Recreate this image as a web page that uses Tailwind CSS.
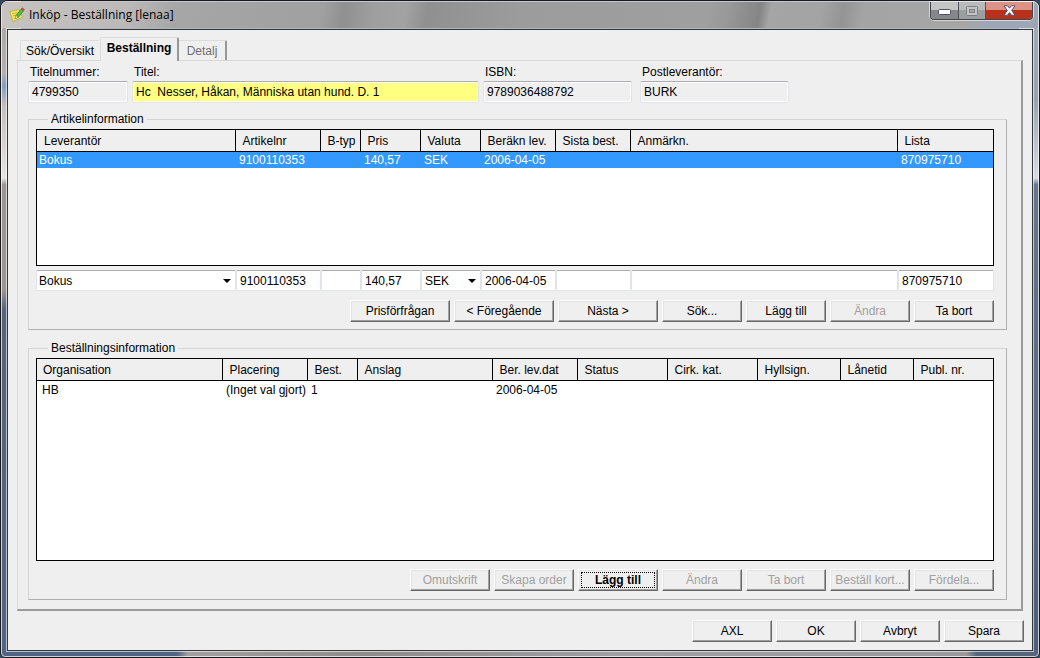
<!DOCTYPE html>
<html lang="sv">
<head>
<meta charset="utf-8">
<title>Inköp - Beställning [lenaa]</title>
<script src="https://cdn.jsdelivr.net/npm/@tailwindcss/browser@4"></script>
</head>
<body class="bg-[#35475f] font-['Liberation_Sans',Arial,sans-serif] text-xs leading-4 text-black">
<div class="flex min-h-screen w-full flex-col rounded-t-lg rounded-b-md border border-[#1b191c] bg-[linear-gradient(to_right,#4f6586_17%,#a3a09f_18%,#8f8b89_35%,#a19fa2_60%,#9b999b_93%,#54657d_94%),linear-gradient(#a5adb8,#98a1ae_15%,#d9dde2_27%,#66768b_28%,#4d5f78),linear-gradient(#a8a4a2,#b5b0ae_11%,#7f9fc4_13%,#c5bfbd_16%,#e8e4e2_27%,#9b9694_28%,#9b9694_44%,#54657d_47%,#4f6586)] bg-[position:bottom,right,left] bg-[size:100%_7px,20px_100%,20px_100%] bg-no-repeat">
<div class="flex grow flex-col rounded-t-md rounded-b border border-white/70">

<header class="flex h-[26px] items-start rounded-t-md bg-[linear-gradient(100deg,#c6c3c1,#bcbab9_12%,#a6a6a6_17%,#a0a0a0_31%,#909090_33%,#9f9f9f_36%,#a2a2a2_39%,#909090_41%,#9c9c9c_50%,#9f9f9f_68%,#989898_70%,#858585_73%,#a5a5a5_74%,#a3a3a3_79%,#949494_81%,#a4a4a4_83%,#a6a6a6_93%,#9da6b5_95%)]">
  <svg class="ml-[7px] mt-[5px] size-4 shrink-0" viewBox="0 0 16 16" aria-hidden="true">
    <path d="M.8 4.500 10 2.800l3.500 7.400L4 14.500z" fill="#f6ec62" stroke="#c2a62c" stroke-width=".8"/>
    <path d="M3 6.800 8.500 5.600M3.800 9l4-1M4.500 11.400l5.500-1.600" stroke="#b39a30" stroke-width=".8"/>
    <path d="M7 8.500 12.200 2l2.300 1.800L9.300 10.500l-3 1z" fill="#58b947" stroke="#2f7d2c" stroke-width=".7"/>
    <path d="m12.200 2 1-1.300 2.300 1.800-1 1.300z" fill="#e2473a" stroke="#b93026" stroke-width=".5"/>
    <path d="m7 8.700 1.900 1.700-2.600 1.100z" fill="#f5d9a0"/>
  </svg>
  <h1 class="ml-1 mt-[5px] grow font-['Open_Sans','Noto_Sans',sans-serif] text-xs leading-4">Inköp - Beställning [lenaa]</h1>
  <div class="mr-[5px] flex h-[18px] shrink-0 overflow-hidden rounded-b border border-t-0 border-[#40434a] shadow-[0_0_0_1px_#ffffff90]">
    <button type="button" aria-label="Minimera" class="flex w-7 items-end justify-center border-r border-[#50535a] bg-linear-to-b from-[#c4c4c4] from-50% to-[#85878a] to-50% pb-1">
      <svg width="13" height="6" viewBox="0 0 13 6"><rect x=".5" y=".5" width="12" height="5" rx="1" fill="#fff" stroke="#50506a"/></svg>
    </button>
    <button type="button" aria-label="Maximera" disabled class="flex w-[27px] items-center justify-center border-r border-[#50535a] bg-linear-to-b from-[#b9bbbb] from-50% to-[#9b9fa1] to-50%">
      <svg width="12" height="10" viewBox="0 0 12 10"><rect x=".5" y=".5" width="11" height="9" rx="1" fill="#c4c4c4" stroke="#7d7f83"/><rect x="3.500" y="3.500" width="5" height="3" fill="#a5a7a8" stroke="#7d7f83"/></svg>
    </button>
    <button type="button" aria-label="Stäng" class="flex w-[46px] items-center justify-center bg-linear-to-b from-[#dd9286] from-50% to-[#b8311d] to-50%">
      <svg width="13" height="11" viewBox="0 0 13 11"><path d="M1 .8h3.500l2 2.400 2-2.400H12L8.700 5.400 12 10.200H8.500l-2-2.600-2 2.600H1l3.300-4.800z" fill="#fff" stroke="#50506a" stroke-width="1"/></svg>
    </button>
  </div>
</header>

<main class="mx-1 mb-1 flex grow flex-col border border-white/60">
<div class="flex grow flex-col border border-[#33363b] bg-[#efefef] px-[9px] pb-2 pt-[7px]">

  <div class="ml-[3px] flex items-end" role="tablist">
    <button type="button" role="tab" class="mr-px h-5 w-[79px] whitespace-nowrap rounded-tl-xs border border-r-0 border-b-0 border-[#dcdcdc] text-center">Sök/Översikt</button>
    <button type="button" role="tab" aria-selected="true" class="relative -mb-px h-6 w-[79px] rounded-t-xs border border-r-2 border-b-0 border-[#dcdcdc] border-r-[#979797] bg-[#efefef] pb-1 text-center font-bold">Beställning</button>
    <button type="button" role="tab" class="h-5 w-12 rounded-tr-xs border border-r-2 border-b-0 border-l-0 border-[#dcdcdc] border-r-[#979797] text-center text-[#707070]">Detalj</button>
  </div>

  <section class="flex grow flex-col border border-r-2 border-b-2 border-[#d8d8d8] border-r-[#9a9a9a] border-b-[#9a9a9a] pb-[9px] pl-2.5 pr-3.5 pt-[3px]">
    <div class="flex">
      <label class="mr-1 block w-[100px]"><span class="ml-0.5 block">Titelnummer:</span>
        <input readonly value="4799350" class="mt-px block h-[22px] w-full rounded-xs border border-[#e0e3ea] border-t-[#abadb3] bg-[#efefef] px-[3px] shadow-[inset_0_0_0_1px_#fff]"></label>
      <label class="mr-1 block w-[347px]"><span class="ml-0.5 block">Titel:</span>
        <input readonly value="Hc  Nesser, Håkan, Människa utan hund. D. 1" class="mt-px block h-[22px] w-full rounded-xs border border-[#e0e3ea] border-t-[#abadb3] bg-[#ffff80] px-[3px] shadow-[inset_0_0_0_1px_#fff]"></label>
      <label class="mr-2 block w-[149px]"><span class="ml-0.5 block">ISBN:</span>
        <input readonly value="9789036488792" class="mt-px block h-[22px] w-full rounded-xs border border-[#e0e3ea] border-t-[#abadb3] bg-[#efefef] px-[3px] shadow-[inset_0_0_0_1px_#fff]"></label>
      <label class="block w-[149px]"><span class="ml-0.5 block">Postleverantör:</span>
        <input readonly value="BURK" class="mt-px block h-[22px] w-full rounded-xs border border-[#e0e3ea] border-t-[#abadb3] bg-[#efefef] px-[3px] shadow-[inset_0_0_0_1px_#fff]"></label>
    </div>

    <fieldset class="mt-2 border border-[#d5d5d5] border-r-[#b0b0b0] border-b-[#b0b0b0] px-[7px] pb-[7px] pr-3">
      <legend class="ml-3 px-[3px]">Artikelinformation</legend>
      <div class="mt-0.5 h-[137px] border border-black bg-white">
        <table class="w-full table-fixed border-collapse text-left">
          <thead>
            <tr class="h-[21px] border-b border-black bg-[#efefef] whitespace-nowrap *:border-r *:border-black *:pl-[7px] *:pt-0.5 *:font-normal *:last:border-r-0">
              <th class="w-[198px]">Leverantör</th><th class="w-[85px]">Artikelnr</th><th class="w-10">B-typ</th><th class="w-[60px]">Pris</th><th class="w-[60px]">Valuta</th><th class="w-[75px]">Beräkn lev.</th><th class="w-[75px]">Sista best.</th><th>Anmärkn.</th><th class="w-[96px]">Lista</th>
            </tr>
          </thead>
          <tbody>
            <tr class="bg-[#3399ff] text-white *:pl-1 *:first:pl-0.5">
              <td>Bokus</td><td>9100110353</td><td></td><td>140,57</td><td>SEK</td><td>2006-04-05</td><td></td><td></td><td>870975710</td>
            </tr>
          </tbody>
        </table>
      </div>

      <div class="mt-1 flex h-[21px] *:h-full *:min-w-0 *:rounded-xs *:border *:border-[#e0e3ea] *:border-t-[#abadb3] *:bg-white">
        <div class="relative w-[200px]">
          <select aria-label="Leverantör" class="h-full w-full appearance-none pl-0.5"><option>Bokus</option></select>
          <svg class="pointer-events-none absolute right-1 top-2" width="8" height="4" viewBox="0 0 8 4"><path d="M0 0h8L4 4z"/></svg>
        </div>
        <input aria-label="Artikelnr" value="9100110353" class="w-[85px] px-[3px]">
        <input aria-label="B-typ" class="w-10 px-0.5">
        <input aria-label="Pris" value="140,57" class="w-[60px] px-[3px]">
        <div class="relative w-[60px]">
          <select aria-label="Valuta" class="h-full w-full appearance-none pl-[3px]"><option>SEK</option></select>
          <svg class="pointer-events-none absolute right-1 top-2" width="8" height="4" viewBox="0 0 8 4"><path d="M0 0h8L4 4z"/></svg>
        </div>
        <input aria-label="Beräkn lev." value="2006-04-05" class="w-[75px] px-[3px]">
        <input aria-label="Sista best." class="w-[75px] px-[3px]">
        <input aria-label="Anmärkn." class="grow basis-0 px-[3px]">
        <input aria-label="Lista" value="870975710" class="w-24 px-[3px]">
      </div>

      <div class="mt-[9px] flex justify-end gap-1 *:h-[22px] *:w-20 *:whitespace-nowrap *:border *:border-white *:border-r-[#696969] *:border-b-[#696969] *:shadow-[inset_-1px_-1px_0_#a0a0a0,inset_1px_1px_0_#e3e3e3] *:disabled:text-[#a0a0a0]">
        <button type="button" class="min-w-[100px]">Prisförfrågan</button>
        <button type="button" class="min-w-[100px]">&lt; Föregående</button>
        <button type="button" class="min-w-[100px]">Nästa &gt;</button>
        <button type="button">Sök...</button>
        <button type="button">Lägg till</button>
        <button type="button" disabled>Ändra</button>
        <button type="button">Ta bort</button>
      </div>
    </fieldset>

    <fieldset class="mt-2.5 flex grow flex-col border border-[#d5d5d5] border-r-[#b0b0b0] border-b-[#b0b0b0] px-[7px] pb-1.5 pr-3">
      <legend class="ml-3 px-[3px]">Beställningsinformation</legend>
      <div class="mt-0.5 min-h-[203px] border border-black bg-white">
        <table class="w-full table-fixed border-collapse text-left">
          <thead>
            <tr class="h-[21px] border-b border-black bg-[#efefef] whitespace-nowrap *:border-r *:border-black *:pl-[7px] *:pt-0.5 *:font-normal *:first:pl-1.5 *:last:border-r-0">
              <th class="w-[185px]">Organisation</th><th class="w-[85px]">Placering</th><th class="w-[50px]">Best.</th><th class="w-[135px]">Anslag</th><th class="w-[85px]">Ber. lev.dat</th><th class="w-[90px]">Status</th><th class="w-[90px]">Cirk. kat.</th><th class="w-[83px]">Hyllsign.</th><th class="w-[73px]">Lånetid</th><th>Publ. nr.</th>
            </tr>
          </thead>
          <tbody>
            <tr class="whitespace-nowrap *:pl-1 *:pt-px *:first:pl-[5px]">
              <td>HB</td><td>(Inget val gjort)</td><td>1</td><td></td><td>2006-04-05</td><td></td><td></td><td></td><td></td><td></td>
            </tr>
          </tbody>
        </table>
      </div>
      <div class="mt-2 flex justify-end gap-1 *:h-[22px] *:w-20 *:whitespace-nowrap *:border *:border-white *:border-r-[#696969] *:border-b-[#696969] *:shadow-[inset_-1px_-1px_0_#a0a0a0,inset_1px_1px_0_#e3e3e3] *:disabled:text-[#a0a0a0]">
        <button type="button" disabled>Omutskrift</button>
        <button type="button" disabled>Skapa order</button>
        <button type="button" class="p-0.5 font-bold"><span class="block border border-dotted border-black leading-[14px]">Lägg till</span></button>
        <button type="button" disabled>Ändra</button>
        <button type="button" disabled>Ta bort</button>
        <button type="button" disabled>Beställ kort...</button>
        <button type="button" disabled>Fördela...</button>
      </div>
    </fieldset>
  </section>

  <footer class="-mr-px mt-[9px] flex justify-end gap-1 *:h-[22px] *:w-20 *:border *:border-white *:border-r-[#696969] *:border-b-[#696969] *:shadow-[inset_-1px_-1px_0_#a0a0a0,inset_1px_1px_0_#e3e3e3]">
    <button type="button">AXL</button>
    <button type="button">OK</button>
    <button type="button">Avbryt</button>
    <button type="button">Spara</button>
  </footer>
</div>
</main>
</div>
</div>
</body>
</html>
